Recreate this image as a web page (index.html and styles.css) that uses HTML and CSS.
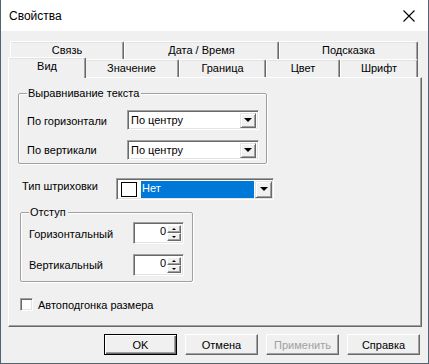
FILE: index.html
```html
<!DOCTYPE html>
<html lang="ru">
<head>
    <meta charset="UTF-8">
    <title>Свойства</title>
    <link rel="stylesheet" href="styles.css">
</head>
<body>
    <div class="window">
        <div class="titlebar">
            <span class="title">Свойства</span>
            <svg class="close" width="12" height="12" viewBox="0 0 12 12">
                <path d="M0.5 0.5 L11.5 11.5 M11.5 0.5 L0.5 11.5" stroke="#000" stroke-width="1.1" fill="none"/>
            </svg>
        </div>

        <div class="body">
            <div class="tabs">
                <div class="tab-row back">
                    <div class="tab w-link">Связь</div>
                    <div class="tab w-date">Дата / Время</div>
                    <div class="tab w-hint">Подсказка</div>
                </div>
                <div class="tab-row front">
                    <div class="tab active w-view">Вид</div>
                    <div class="tab w-value">Значение</div>
                    <div class="tab w-border">Граница</div>
                    <div class="tab w-color">Цвет</div>
                    <div class="tab w-font">Шрифт</div>
                </div>
            </div>

            <div class="panel">
                <div class="group align-group">
                    <div class="group-title">Выравнивание текста</div>
                    <div class="row first">
                        <span class="label">По горизонтали</span>
                        <div class="combo">
                            <span class="combo-text">По центру</span>
                            <span class="drop-btn"><i class="arrow"></i></span>
                        </div>
                    </div>
                    <div class="row">
                        <span class="label">По вертикали</span>
                        <div class="combo">
                            <span class="combo-text">По центру</span>
                            <span class="drop-btn"><i class="arrow"></i></span>
                        </div>
                    </div>
                </div>

                <div class="hatch-row">
                    <span class="label">Тип штриховки</span>
                    <div class="combo hatch">
                        <span class="swatch"></span>
                        <span class="selected">Нет</span>
                        <span class="drop-btn"><i class="arrow"></i></span>
                    </div>
                </div>

                <div class="group indent-group">
                    <div class="group-title">Отступ</div>
                    <div class="row first">
                        <span class="label">Горизонтальный</span>
                        <div class="spin">
                            <span class="spin-value">0</span>
                            <span class="spin-btns">
                                <span class="spin-btn"><i class="up"></i></span>
                                <span class="spin-btn"><i class="down"></i></span>
                            </span>
                        </div>
                    </div>
                    <div class="row">
                        <span class="label">Вертикальный</span>
                        <div class="spin">
                            <span class="spin-value">0</span>
                            <span class="spin-btns">
                                <span class="spin-btn"><i class="up"></i></span>
                                <span class="spin-btn"><i class="down"></i></span>
                            </span>
                        </div>
                    </div>
                </div>

                <label class="check">
                    <span class="box"></span>
                    Автоподгонка размера
                </label>
            </div>

            <div class="buttons">
                <button class="btn default">OK</button>
                <button class="btn">Отмена</button>
                <button class="btn" disabled>Применить</button>
                <button class="btn">Справка</button>
            </div>
        </div>
    </div>
</body>
</html>
```

FILE: styles.css
```css
body {
    margin: 0;
    font-family: 'Liberation Sans', Arial, sans-serif;
    font-size: 11px;
    color: #000;
    background: #f0f0f0;
}

/* Window frame */
.window {
    box-sizing: border-box;
    width: 429px;
    height: 364px;
    background: #f0f0f0;
    border-left: 1px solid #4f6672;
    border-right: 1px solid #4f6672;
    border-bottom: 1px solid #4f6672;
}

.titlebar {
    height: 31px;
    background: #fff;
    display: flex;
    align-items: center;
    justify-content: space-between;
    padding: 0 13px 0 8px;
}

.title {
    font-size: 12px;
}

.body {
    padding: 10px 7px 0 7px;
}

/* Tabs */
.tab-row {
    display: flex;
    height: 18px;
    padding-left: 2px;
}

.tab {
    box-sizing: border-box;
    height: 18px;
    border-top: 1px solid #fff;
    border-left: 1px solid #fff;
    border-right: 1px solid #696969;
    box-shadow: inset -1px 0 #a0a0a0, inset 0 1px #e3e3e3;
    border-radius: 2px 2px 0 0;
    text-align: center;
    line-height: 17px;
    background: #f0f0f0;
}

.tab-row.back .tab {
    height: 19px;
}

.tab.active {
    position: relative;
    z-index: 2;
    height: 21px;
    margin: -2px -2px 0 -2px;
    line-height: 16px;
}

.w-link { width: 114px; }
.w-date { width: 155px; }
.w-hint { width: 139px; }
.w-view { width: 78px; }
.w-value { width: 95px; }
.w-border { width: 87px; }
.w-color { width: 74px; }
.w-font { width: 78px; }

/* Tab page */
.panel {
    box-sizing: border-box;
    width: 414px;
    height: 250px;
    border-top: 1px solid #fff;
    border-left: 1px solid #fff;
    border-right: 1px solid #696969;
    border-bottom: 1px solid #696969;
    box-shadow: inset -1px -1px #a0a0a0;
    padding: 15px 0 0 9px;
}

.group {
    box-sizing: border-box;
    border: 1px solid #a0a0a0;
    box-shadow: 1px 1px 0 #fff, inset 1px 1px 0 #fff;
    border-radius: 2px;
}

.group-title {
    width: fit-content;
    margin: -8px 0 0 8px;
    padding: 0 2px 0 1px;
    background: #f0f0f0;
    line-height: 14px;
}

.align-group {
    width: 249px;
    height: 71px;
}

.row {
    display: flex;
    align-items: center;
    margin-top: 10px;
}

.row.first {
    margin-top: 3px;
}

.align-group .row {
    padding-left: 8px;
}

.align-group .row.first {
    margin-top: 10px;
}

.align-group .label {
    width: 100px;
}

/* Combo boxes */
.combo {
    box-sizing: border-box;
    display: flex;
    align-items: center;
    width: 132px;
    height: 20px;
    background: #fff;
    border-top: 1px solid #a0a0a0;
    border-left: 1px solid #a0a0a0;
    border-right: 1px solid #fff;
    border-bottom: 1px solid #fff;
    box-shadow: inset 1px 1px #696969, inset -1px -1px #e3e3e3;
    padding: 2px 2px 2px 3px;
}

.combo-text {
    flex: 1;
}

.drop-btn {
    box-sizing: border-box;
    width: 16px;
    height: 15px;
    display: flex;
    align-items: center;
    justify-content: center;
    background: #f0f0f0;
    border-top: 1px solid #e3e3e3;
    border-left: 1px solid #e3e3e3;
    border-right: 1px solid #696969;
    border-bottom: 1px solid #696969;
    box-shadow: inset 1px 1px #fff, inset -1px -1px #a0a0a0;
}

.arrow {
    width: 0;
    height: 0;
    border-left: 4px solid transparent;
    border-right: 4px solid transparent;
    border-top: 4px solid #000;
}

.hatch-row {
    display: flex;
    align-items: center;
    margin: 14px 0 0 4px;
}

.hatch-row .label {
    width: 94px;
    margin-top: -6px;
}

.combo.hatch {
    width: 158px;
    height: 22px;
    padding: 2px 1px 2px 4px;
}

.swatch {
    box-sizing: border-box;
    width: 16px;
    height: 15px;
    border: 1px solid #000;
    background: #fff;
    margin-right: 4px;
}

.selected {
    flex: 1;
    height: 17px;
    line-height: 15px;
    background: #0078d7;
    color: #fff;
    padding-left: 1px;
    margin-right: 1px;
}

.combo.hatch .drop-btn {
    width: 17px;
    height: 17px;
}

/* Indent group */
.indent-group {
    width: 173px;
    height: 70px;
    margin: 12px 0 0 2px;
}

.indent-group .row {
    padding-left: 8px;
}

.indent-group .label {
    width: 104px;
}

.row.first .label {
    margin-top: 1px;
}

.spin {
    box-sizing: border-box;
    display: flex;
    width: 51px;
    height: 22px;
    background: #fff;
    border-top: 1px solid #a0a0a0;
    border-left: 1px solid #a0a0a0;
    border-right: 1px solid #fff;
    border-bottom: 1px solid #fff;
    box-shadow: inset 1px 1px #696969, inset -1px -1px #e3e3e3;
    padding: 2px 2px 2px 2px;
}

.spin-value {
    flex: 1;
    text-align: right;
    line-height: 13px;
    padding-right: 1px;
}

.spin-btns {
    display: flex;
    flex-direction: column;
    width: 14px;
}

.spin-btn {
    box-sizing: border-box;
    height: 8px;
    flex: 1;
    display: flex;
    align-items: center;
    justify-content: center;
    background: #f0f0f0;
    border-top: 1px solid #fff;
    border-left: 1px solid #fff;
    border-right: 1px solid #696969;
    border-bottom: 1px solid #696969;
    box-shadow: inset -1px -1px #a0a0a0;
}

.up, .down {
    width: 0;
    height: 0;
    border-left: 2px solid transparent;
    border-right: 2px solid transparent;
}

.up {
    border-bottom: 2px solid #000;
}

.down {
    border-top: 2px solid #000;
}

/* Checkbox */
.check {
    display: flex;
    align-items: center;
    margin: 16px 0 0 2px;
}

.box {
    box-sizing: border-box;
    width: 13px;
    height: 13px;
    background: #fff;
    border: 1px solid #a0a0a0;
    border-right-color: #fff;
    border-bottom-color: #fff;
    box-shadow: inset 1px 1px #696969, inset -1px -1px #e3e3e3;
    margin-right: 5px;
}

/* Dialog buttons */
.buttons {
    display: flex;
    justify-content: flex-end;
    gap: 8px;
    margin-top: 7px;
    padding-right: 1px;
}

.btn {
    box-sizing: border-box;
    width: 73px;
    height: 21px;
    padding: 0;
    font-family: inherit;
    font-size: 11px;
    color: #000;
    background: #f0f0f0;
    border-top: 1px solid #fff;
    border-left: 1px solid #fff;
    border-right: 1px solid #696969;
    border-bottom: 1px solid #696969;
    box-shadow: inset -1px -1px #a0a0a0;
}

.btn.default {
    border: 1px solid #000;
    box-shadow: inset 1px 1px #fff, inset -1px -1px #696969, inset -2px -2px #a0a0a0;
}

.btn:disabled {
    color: #a0a0a0;
}
```
